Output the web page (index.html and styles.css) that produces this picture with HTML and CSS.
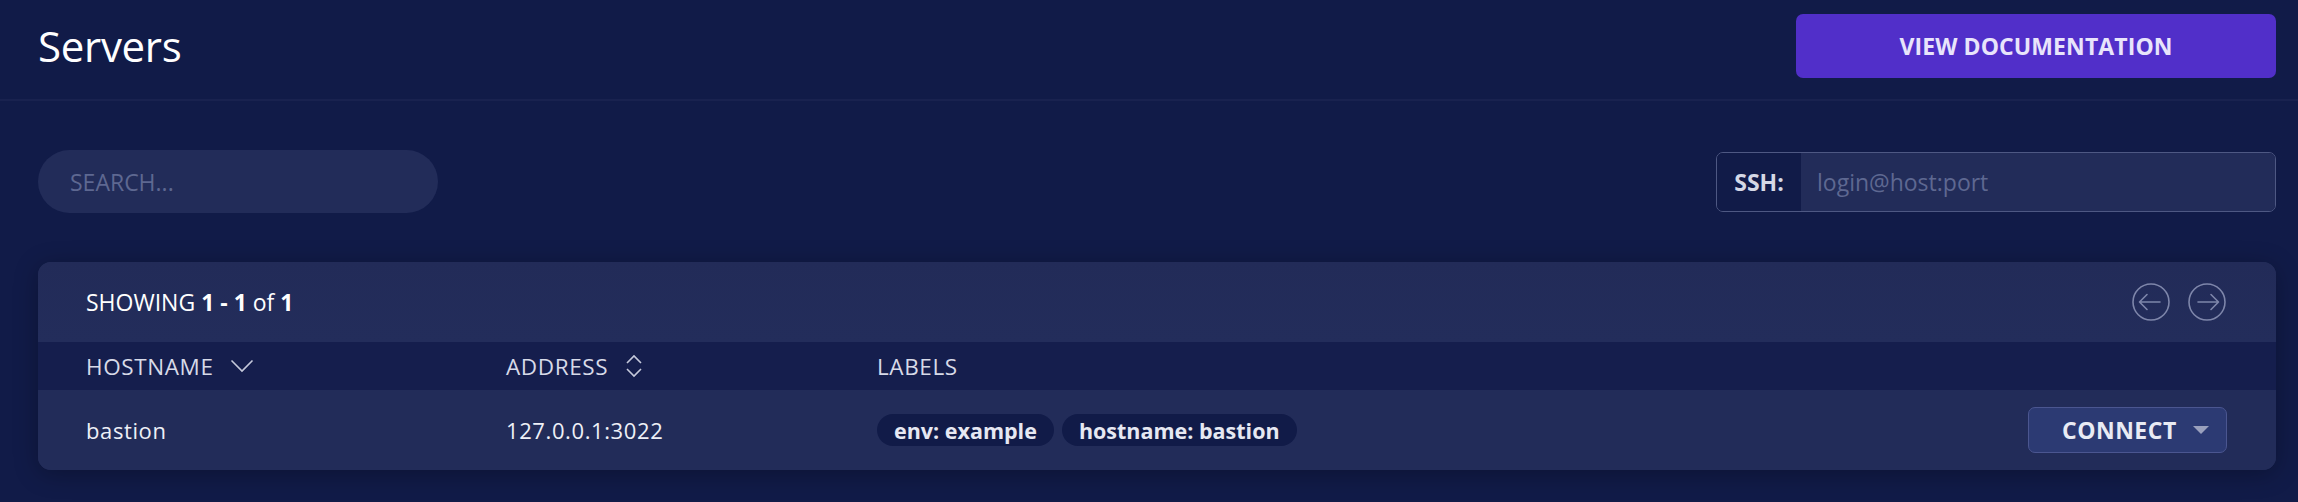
FILE: index.html
```html
<!DOCTYPE html>
<html lang="en">
<head>
<meta charset="utf-8">
<title>Servers</title>
<link rel="stylesheet" href="styles.css">
</head>
<body>
<header class="topbar">
  <h1 class="title">Servers</h1>
  <button class="btn-docs">VIEW DOCUMENTATION</button>
</header>
<main class="content">
  <div class="toolbar">
    <div class="search"><input class="search-input" placeholder="SEARCH..."></div>
    <div class="ssh">
      <span class="ssh-label">SSH:</span>
      <input class="ssh-input" placeholder="login@host:port">
    </div>
  </div>
  <section class="card">
    <div class="card-top">
      <div class="showing">SHOWING <b>1 - 1</b> of <b>1</b></div>
      <div class="pager">
        <button class="pager-btn" aria-label="previous">
          <svg width="38" height="38" viewBox="0 0 38 38"><circle cx="19" cy="19" r="18" fill="none" stroke="currentColor" stroke-width="1.6"/><path d="M28 19H8M15 11.5L7.5 19L15 26.5" fill="none" stroke="currentColor" stroke-width="1.6" stroke-linecap="round" stroke-linejoin="round"/></svg>
        </button>
        <button class="pager-btn" aria-label="next">
          <svg width="38" height="38" viewBox="0 0 38 38"><circle cx="19" cy="19" r="18" fill="none" stroke="currentColor" stroke-width="1.6"/><path d="M10 19H30M23 11.5L30.5 19L23 26.5" fill="none" stroke="currentColor" stroke-width="1.6" stroke-linecap="round" stroke-linejoin="round"/></svg>
        </button>
      </div>
    </div>
    <div class="row head">
      <div class="cell">HOSTNAME
        <svg class="sort" width="24" height="14" viewBox="0 0 24 14"><path d="M1.5 1.5L12 12L22.5 1.5" fill="none" stroke="currentColor" stroke-width="1.6"/></svg>
      </div>
      <div class="cell">ADDRESS
        <svg class="sort" width="20" height="24" viewBox="0 0 20 24"><path d="M3 9L10 2L17 9M3 15L10 22L17 15" fill="none" stroke="currentColor" stroke-width="1.6"/></svg>
      </div>
      <div class="cell">LABELS</div>
      <div class="cell"></div>
    </div>
    <div class="row body">
      <div class="cell">bastion</div>
      <div class="cell">127.0.0.1:3022</div>
      <div class="cell labels">
        <span class="pill">env: example</span>
        <span class="pill">hostname: bastion</span>
      </div>
      <div class="cell">
        <button class="btn-connect">CONNECT <span class="caret"></span></button>
      </div>
    </div>
  </section>
</main>
</body>
</html>
```
FILE: styles.css
```css
* { box-sizing: border-box; }
html, body { margin: 0; }
body {
  background: #111b48;
  color: #e9ebf4;
  font-family: "Open Sans", "Noto Sans", sans-serif;
  height: 502px;
  overflow: hidden;
}
.topbar {
  height: 101px;
  display: flex;
  justify-content: space-between;
  align-items: flex-start;
  padding: 14px 22px 0 38px;
  border-bottom: 2px solid #19224f;
}
.title {
  margin: 0;
  font-weight: 400;
  font-size: 42px;
  line-height: 64px;
  color: #ffffff;
  letter-spacing: -0.3px;
}
.btn-docs {
  width: 480px;
  height: 64px;
  border: none;
  border-radius: 7px;
  background: #512fc9;
  color: #e8e4fb;
  font-family: inherit;
  font-weight: 700;
  font-size: 23px;
  letter-spacing: 0.1px;
}
.content { padding: 0 22px 0 38px; }
.toolbar {
  display: flex;
  justify-content: space-between;
  align-items: center;
  margin-top: 49px;
}
.search-input {
  width: 400px;
  height: 63px;
  border: none;
  border-radius: 32px;
  background: #222c59;
  padding: 0 32px;
  font-family: inherit;
  font-size: 23px;
  color: #fff;
  outline: none;
}
.search-input::placeholder { color: #5e6891; }
.ssh {
  display: flex;
  width: 560px;
  height: 60px;
  border: 1.5px solid #4e5883;
  border-radius: 7px;
  overflow: hidden;
}
.ssh-label {
  width: 84px;
  display: flex;
  align-items: center;
  justify-content: center;
  background: #111b48;
  font-weight: 700;
  font-size: 23px;
  color: #d5d8e6;
}
.ssh-input {
  flex: 1;
  border: none;
  background: #222c59;
  padding: 0 16px;
  font-family: inherit;
  font-size: 23px;
  color: #fff;
  outline: none;
}
.ssh-input::placeholder { color: #5e6891; }
.card {
  margin-top: 49px;
  border-radius: 13px;
  overflow: hidden;
  background: #222c59;
  box-shadow: 0 4px 24px rgba(0, 0, 0, 0.28);
}
.card-top {
  height: 80px;
  display: flex;
  justify-content: space-between;
  align-items: center;
  padding: 0 50px 0 48px;
  background: linear-gradient(#222b58, #232d5b);
}
.showing {
  font-size: 23px;
  color: #ffffff;
}
.showing b { font-weight: 700; }
.pager { display: flex; gap: 18px; }
.pager-btn {
  padding: 0;
  border: none;
  background: none;
  color: #7e86aa;
  display: flex;
}
.row {
  display: grid;
  grid-template-columns: 420px 371px 1fr auto;
  align-items: center;
  padding: 0 49px 0 48px;
}
.row.head {
  height: 48px;
  background: #151e4d;
  font-size: 22.5px;
  letter-spacing: 0.6px;
  color: #d7dae8;
}
.row.head .cell {
  display: flex;
  align-items: center;
  gap: 16px;
}
.sort { color: #c5c9db; }
.row.body {
  height: 80px;
  background: #222c59;
  font-size: 22px;
  letter-spacing: 0.6px;
  color: #eef0f7;
}
.labels { display: flex; gap: 8px; letter-spacing: 0; }
.pill {
  height: 32px;
  display: inline-flex;
  align-items: center;
  padding: 0 17px;
  border-radius: 16px;
  background: #111b48;
  font-weight: 700;
  font-size: 21.5px;
  color: #e6e8f2;
}
.btn-connect {
  width: 199px;
  height: 46px;
  border: 1.5px solid #4b5690;
  border-radius: 7px;
  background: #2c3a73;
  color: #e9ebf4;
  font-family: inherit;
  font-weight: 700;
  font-size: 23px;
  letter-spacing: 0.5px;
  display: flex;
  align-items: center;
  justify-content: flex-start;
  gap: 16px;
  padding: 0 0 0 33px;
}
.caret {
  width: 0;
  height: 0;
  border-left: 8px solid transparent;
  border-right: 8px solid transparent;
  border-top: 8px solid #9aa0bd;
}
```
